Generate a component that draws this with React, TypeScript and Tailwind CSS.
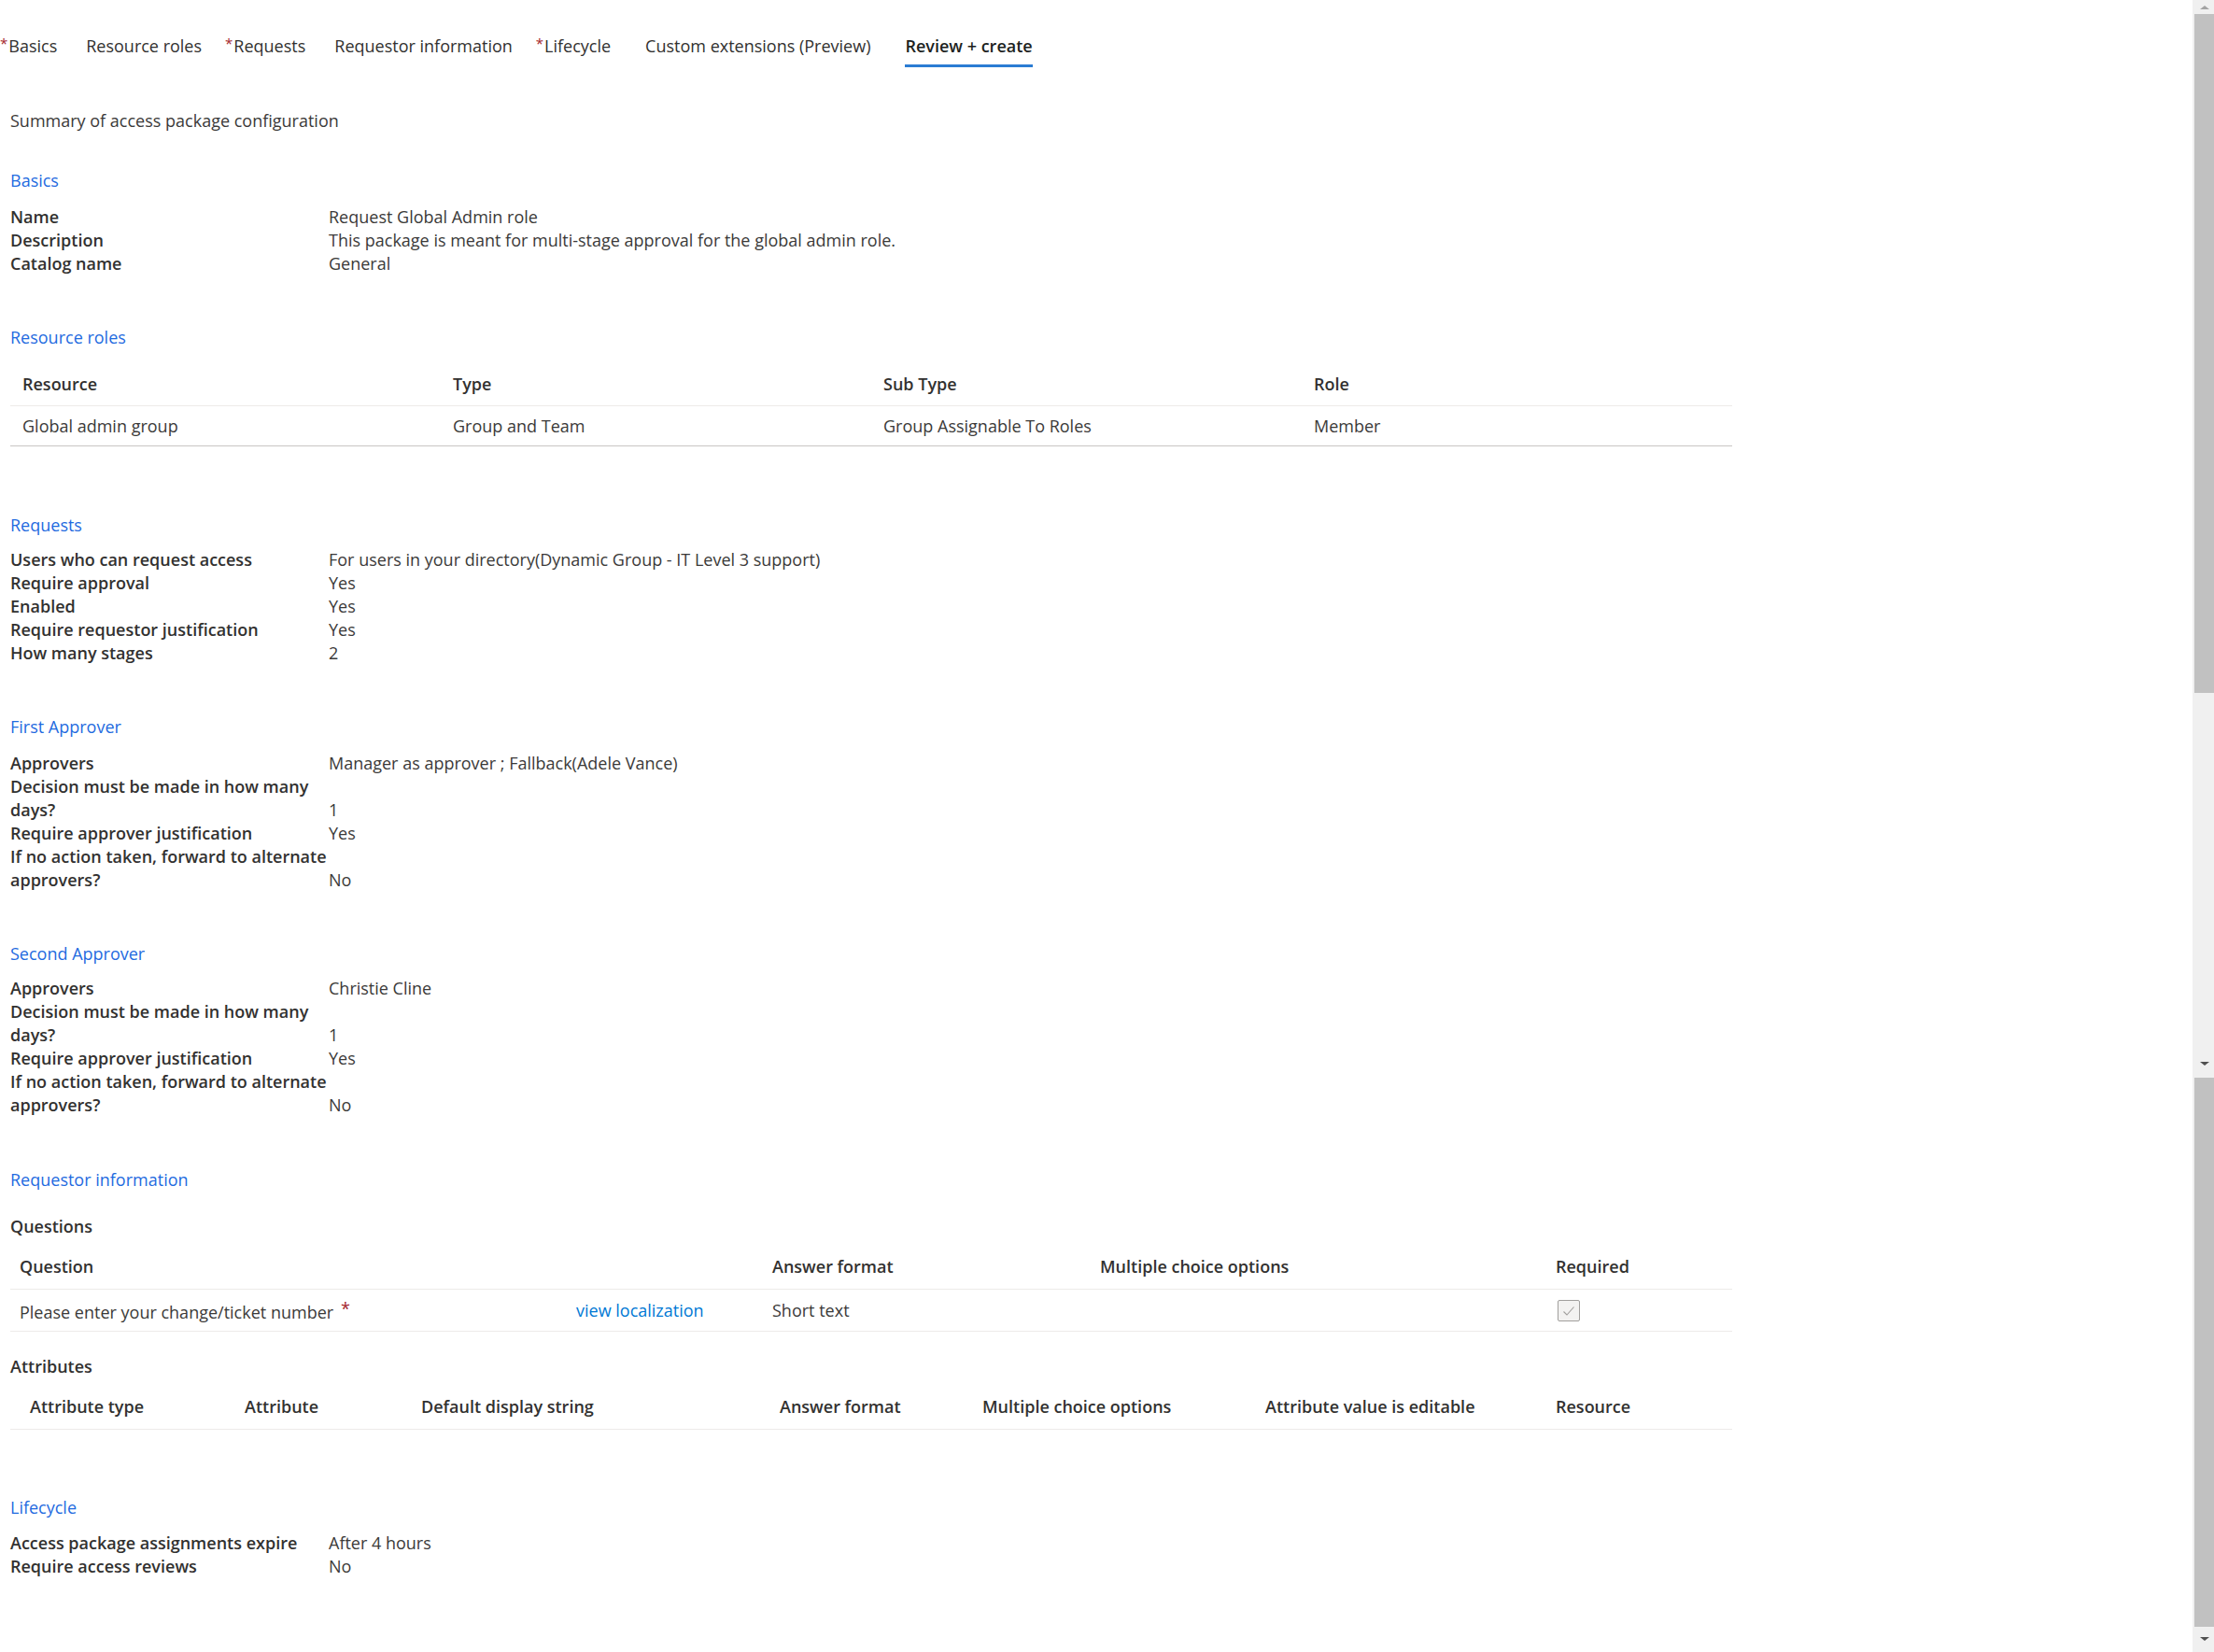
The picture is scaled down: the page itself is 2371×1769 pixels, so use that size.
import React from 'react';

const FONT = { fontFamily: '"Open Sans", "Noto Sans", Arial, sans-serif' };

interface Row {
  label: React.ReactNode;
  value?: React.ReactNode;
}

// shift nudges the tab left/right a little so it lines up with the portal spacing
const tabs = [
  { name: 'Basics', required: true, shift: '' },
  { name: 'Resource roles', shift: '' },
  { name: 'Requests', required: true, shift: 'ml-[-6px]' },
  { name: 'Requestor information', shift: '' },
  { name: 'Lifecycle', required: true, shift: 'ml-[-6px]' },
  { name: 'Custom extensions (Preview)', shift: 'ml-[6px]' },
  { name: 'Review + create', active: true, shift: 'ml-[6px]' },
];

const Heading: React.FC<{ className?: string; children: React.ReactNode }> = ({ className, children }) => (
  <div className={`text-[#1f6be0] ${className ?? ''}`}>{children}</div>
);

// label/value summary list
const Summary: React.FC<{ rows: Row[]; className?: string }> = ({ rows, className }) => (
  <div className={`grid grid-cols-[341px_1fr] ${className ?? ''}`}>
    {rows.map((r, i) => (
      <React.Fragment key={i}>
        <div className="font-semibold text-[#323130] whitespace-nowrap">{r.label}</div>
        <div className="text-[#3b3a39] flex flex-col justify-end">{r.value}</div>
      </React.Fragment>
    ))}
  </div>
);

const approverRows = (approvers: string): Row[] => [
  { label: 'Approvers', value: approvers },
  { label: <>Decision must be made in how many<br />days?</>, value: '1' },
  { label: 'Require approver justification', value: 'Yes' },
  { label: <>If no action taken, forward to alternate<br />approvers?</>, value: 'No' },
];

const Checkbox = () => (
  <div className="w-[24px] h-[23px] rounded-[2px] border border-[#a19f9d] bg-[#f3f2f1] flex items-center justify-center">
    <svg width="14" height="12" viewBox="0 0 14 12" fill="none">
      <path d="M1.5 6.5 L5 10 L12.5 1.5" stroke="#a19f9d" strokeWidth="1.1" />
    </svg>
  </div>
);

const ArrowDown = () => (
  <div className="h-[15px] flex items-center justify-center pl-[2px]">
    <div className="w-0 h-0 border-l-[5px] border-r-[5px] border-t-[4px] border-l-transparent border-r-transparent border-t-[#505050]" />
  </div>
);

const Scrollbar = () => (
  <div className="w-[23px] h-full flex flex-col bg-[#f0f0f0]">
    <div className="h-[15px] flex items-center justify-center pl-[2px]">
      <div className="w-0 h-0 border-l-[5px] border-r-[5px] border-b-[4px] border-l-transparent border-r-transparent border-b-[#a3a3a3]" />
    </div>
    <div className="h-[727px] ml-[2px] bg-[#c1c1c1]" />
    <div className="flex-1" />
    <ArrowDown />
    <div className="h-[588px] mt-[8px] ml-[2px] bg-[#c1c1c1]" />
    <div className="h-[5px]" />
    <ArrowDown />
    <div className="h-[7px]" />
  </div>
);

export default function App() {
  return (
    <div className="w-[2371px] h-[1769px] flex bg-white overflow-hidden text-[18px] leading-[25px] text-[#323130]" style={FONT}>
      <div className="flex-1 min-w-0">
        {/* wizard tabs */}
        <div className="flex gap-[31px]">
          {tabs.map((t) => (
            <div key={t.name} className={`flex flex-col pt-[37px] ${t.shift}`}>
              <div className={`flex whitespace-nowrap ${t.active ? 'font-semibold text-[#201f1e]' : 'text-[#323130]'}`}>
                {t.required && <span className="text-[#a4262c] text-[15px] leading-[18px] mr-[1px]">*</span>}
                {t.name}
              </div>
              <div className={`mt-[7px] h-[3px] ${t.active ? 'bg-[#2b7cd3]' : 'bg-transparent'}`} />
            </div>
          ))}
        </div>

        <div className="pl-[11px] w-[1855px]">
          <div className="mt-[45px] text-[#3b3a39]">Summary of access package configuration</div>

          <Heading className="mt-[39px]">Basics</Heading>
          <Summary
            className="mt-[14px]"
            rows={[
              { label: 'Name', value: 'Request Global Admin role' },
              { label: 'Description', value: 'This package is meant for multi-stage approval for the global admin role.' },
              { label: 'Catalog name', value: 'General' },
            ]}
          />

          <Heading className="mt-[54px]">Resource roles</Heading>
          <div className="mt-[15px] border-b border-[#c8c6c4]">
            <div className="grid grid-cols-4 h-[46px] items-center border-b border-[#edebe9] font-semibold">
              {['Resource', 'Type', 'Sub Type', 'Role'].map((h) => (
                <div key={h} className="pl-[13px]">{h}</div>
              ))}
            </div>
            <div className="grid grid-cols-4 h-[42px] items-center pt-[1px] text-[#3b3a39]">
              {['Global admin group', 'Group and Team', 'Group Assignable To Roles', 'Member'].map((c) => (
                <div key={c} className="pl-[13px]">{c}</div>
              ))}
            </div>
          </div>

          <Heading className="mt-[72px]">Requests</Heading>
          <Summary
            className="mt-[12px]"
            rows={[
              { label: 'Users who can request access', value: 'For users in your directory(Dynamic Group - IT Level 3 support)' },
              { label: 'Require approval', value: 'Yes' },
              { label: 'Enabled', value: 'Yes' },
              { label: 'Require requestor justification', value: 'Yes' },
              { label: 'How many stages', value: '2' },
            ]}
          />

          <Heading className="mt-[54px]">First Approver</Heading>
          <Summary className="mt-[14px]" rows={approverRows('Manager as approver ; Fallback(Adele Vance)')} />

          <Heading className="mt-[54px]">Second Approver</Heading>
          <Summary className="mt-[12px]" rows={approverRows('Christie Cline')} />

          <Heading className="mt-[55px]">Requestor information</Heading>
          <div className="mt-[25px] font-semibold">Questions</div>
          <div className="mt-[6px]">
            <div className="grid grid-cols-[806px_351px_488px_199px] h-[49px] items-center border-b border-[#edebe9] font-semibold">
              <div className="pl-[10px]">Question</div>
              <div className="pl-[10px]">Answer format</div>
              <div className="pl-[10px]">Multiple choice options</div>
              <div className="pl-[10px]">Required</div>
            </div>
            <div className="grid grid-cols-[596px_210px_351px_488px_199px] h-[45px] items-center pt-[1px] border-b border-[#edebe9] text-[#3b3a39]">
              <div className="pl-[10px] flex items-start pt-[4px]">
                Please enter your change/ticket number
                <span className="text-[#a4262c] ml-[8px] text-[18px] leading-[17px]">*</span>
              </div>
              <div className="pl-[10px] text-[#0078d4]">view localization</div>
              <div className="pl-[10px]">Short text</div>
              <div />
              <div className="pl-[12px]">
                <Checkbox />
              </div>
            </div>
          </div>

          <div className="mt-[25px] font-semibold">Attributes</div>
          <div className="mt-[6px] grid grid-cols-[230px_189px_384px_217px_303px_311px_210px] h-[49px] items-center border-b border-[#edebe9] font-semibold">
            {['Attribute type', 'Attribute', 'Default display string', 'Answer format', 'Multiple choice options', 'Attribute value is editable', 'Resource'].map((h) => (
              <div key={h} className="pl-[21px] whitespace-nowrap">{h}</div>
            ))}
          </div>

          <Heading className="mt-[71px]">Lifecycle</Heading>
          <Summary
            className="mt-[13px]"
            rows={[
              { label: 'Access package assignments expire', value: 'After 4 hours' },
              { label: 'Require access reviews', value: 'No' },
            ]}
          />
        </div>
      </div>
      <Scrollbar />
    </div>
  );
}
